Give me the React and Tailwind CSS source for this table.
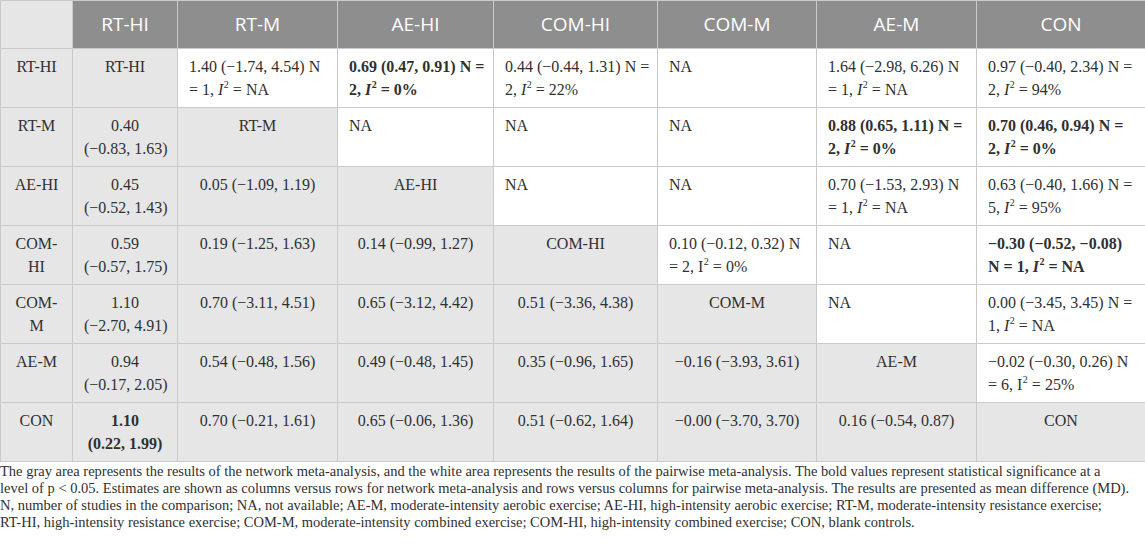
const cols = ["RT-HI", "RT-M", "AE-HI", "COM-HI", "COM-M", "AE-M", "CON"];
const widths = [72, 105, 160, 156, 164, 159, 160, 169];

function I2({ italic = true }) {
  return (
    <>
      <span className={italic ? "italic" : ""}>I</span>
      <sup className="text-[10px] -top-[7px] pl-[0.5px]">2</sup>
    </>
  );
}

// each cell: { g: gray?, b: bold?, a: line 1, c: line 2 (node) }
const rows = [
  {
    label: ["RT-HI"],
    cells: [
      { g: true, a: "RT-HI" },
      { a: "1.40 (−1.74, 4.54) N", c: <>= 1, <I2 /> = NA</> },
      { b: true, a: "0.69 (0.47, 0.91) N =", c: <>2, <I2 /> = 0%</> },
      { a: "0.44 (−0.44, 1.31) N =", c: <>2, <I2 /> = 22%</> },
      { a: "NA" },
      { a: "1.64 (−2.98, 6.26) N", c: <>= 1, <I2 /> = NA</> },
      { a: "0.97 (−0.40, 2.34) N =", c: <>2, <I2 /> = 94%</> },
    ],
  },
  {
    label: ["RT-M"],
    cells: [
      { g: true, a: "0.40", c: "(−0.83, 1.63)" },
      { g: true, a: "RT-M" },
      { a: "NA" },
      { a: "NA" },
      { a: "NA" },
      { b: true, a: "0.88 (0.65, 1.11) N =", c: <>2, <I2 /> = 0%</> },
      { b: true, a: "0.70 (0.46, 0.94) N =", c: <>2, <I2 /> = 0%</> },
    ],
  },
  {
    label: ["AE-HI"],
    cells: [
      { g: true, a: "0.45", c: "(−0.52, 1.43)" },
      { g: true, a: "0.05 (−1.09, 1.19)" },
      { g: true, a: "AE-HI" },
      { a: "NA" },
      { a: "NA" },
      { a: "0.70 (−1.53, 2.93) N", c: <>= 1, <I2 /> = NA</> },
      { a: "0.63 (−0.40, 1.66) N =", c: <>5, <I2 /> = 95%</> },
    ],
  },
  {
    label: ["COM-", "HI"],
    cells: [
      { g: true, a: "0.59", c: "(−0.57, 1.75)" },
      { g: true, a: "0.19 (−1.25, 1.63)" },
      { g: true, a: "0.14 (−0.99, 1.27)" },
      { g: true, a: "COM-HI" },
      { a: "0.10 (−0.12, 0.32) N", c: <>= 2, <I2 italic={false} /> = 0%</> },
      { a: "NA" },
      { b: true, a: "−0.30 (−0.52, −0.08)", c: <>N = 1, <I2 /> = NA</> },
    ],
  },
  {
    label: ["COM-", "M"],
    cells: [
      { g: true, a: "1.10", c: "(−2.70, 4.91)" },
      { g: true, a: "0.70 (−3.11, 4.51)" },
      { g: true, a: "0.65 (−3.12, 4.42)" },
      { g: true, a: "0.51 (−3.36, 4.38)" },
      { g: true, a: "COM-M" },
      { a: "NA" },
      { a: "0.00 (−3.45, 3.45) N =", c: <>1, <I2 /> = NA</> },
    ],
  },
  {
    label: ["AE-M"],
    cells: [
      { g: true, a: "0.94", c: "(−0.17, 2.05)" },
      { g: true, a: "0.54 (−0.48, 1.56)" },
      { g: true, a: "0.49 (−0.48, 1.45)" },
      { g: true, a: "0.35 (−0.96, 1.65)" },
      { g: true, a: "−0.16 (−3.93, 3.61)" },
      { g: true, a: "AE-M" },
      { a: "−0.02 (−0.30, 0.26) N", c: <>= 6, <I2 italic={false} /> = 25%</> },
    ],
  },
  {
    label: ["CON"],
    cells: [
      { g: true, b: true, a: "1.10", c: "(0.22, 1.99)" },
      { g: true, a: "0.70 (−0.21, 1.61)" },
      { g: true, a: "0.65 (−0.06, 1.36)" },
      { g: true, a: "0.51 (−0.62, 1.64)" },
      { g: true, a: "−0.00 (−3.70, 3.70)" },
      { g: true, a: "0.16 (−0.54, 0.87)" },
      { g: true, a: "CON" },
    ],
  },
];

const notes = [
  "The gray area represents the results of the network meta-analysis, and the white area represents the results of the pairwise meta-analysis. The bold values represent statistical significance at a",
  "level of p < 0.05. Estimates are shown as columns versus rows for network meta-analysis and rows versus columns for pairwise meta-analysis. The results are presented as mean difference (MD).",
  "N, number of studies in the comparison; NA, not available; AE-M, moderate-intensity aerobic exercise; AE-HI, high-intensity aerobic exercise; RT-M, moderate-intensity resistance exercise;",
  "RT-HI, high-intensity resistance exercise; COM-M, moderate-intensity combined exercise; COM-HI, high-intensity combined exercise; CON, blank controls.",
];

export default function App() {
  return (
    <div className="w-[1145px] h-[549px] bg-white overflow-hidden">
      <table className="table-fixed border-collapse w-[1145px] font-['Liberation_Serif',serif] text-[16px] leading-[22.5px] text-[#303030]">
        <colgroup>
          {widths.map((w, i) => (
            <col key={i} style={{ width: w }} />
          ))}
        </colgroup>
        <thead>
          <tr className="h-[48px]">
            <th className="bg-[#e6e6e6] border border-[#cacaca]" />
            {cols.map((c) => (
              <th
                key={c}
                className="bg-[#8e8e8e] border border-[#cacaca] text-white font-normal font-['Open_Sans',sans-serif] text-[19px] text-center align-middle"
              >
                {c}
              </th>
            ))}
          </tr>
        </thead>
        <tbody>
          {rows.map((r, ri) => (
            <tr key={ri} className="h-[59px]">
              <td className="bg-[#e6e6e6] border border-[#cacaca] text-center align-top px-1 pt-[7px]">
                {r.label.map((l, i) => (
                  <div key={i}>{l}</div>
                ))}
              </td>
              {r.cells.map((c, ci) => (
                <td
                  key={ci}
                  className={`border border-[#cacaca] align-top pt-[7px] px-[11px] ${
                    c.g ? "bg-[#e6e6e6] text-center" : "bg-white text-left"
                  } ${c.b ? "font-bold" : ""}`}
                >
                  <div className="whitespace-nowrap">{c.a}</div>
                  {c.c && <div className="whitespace-nowrap">{c.c}</div>}
                </td>
              ))}
            </tr>
          ))}
        </tbody>
      </table>
      <div className="pt-[1px] font-['Liberation_Serif',serif] text-[14.5px] leading-[17px] text-[#303030]">
        {notes.map((n, i) => (
          <div key={i} className="whitespace-nowrap">
            {n}
          </div>
        ))}
      </div>
    </div>
  );
}
